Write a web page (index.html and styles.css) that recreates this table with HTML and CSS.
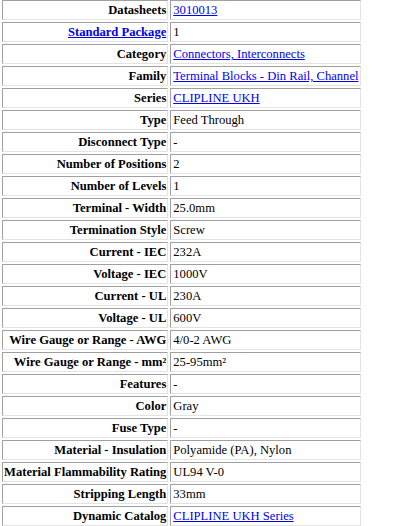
FILE: index.html
```html
<!DOCTYPE html>
<html>
<head>
<meta charset="utf-8">
<link rel="stylesheet" href="styles.css">
</head>
<body>
<table class="specs">
<tr><th>Datasheets</th><td><a href="#">3010013</a></td></tr>
<tr><th><a href="#">Standard Package</a></th><td>1</td></tr>
<tr><th>Category</th><td><a href="#">Connectors, Interconnects</a></td></tr>
<tr><th>Family</th><td><a href="#">Terminal Blocks - Din Rail, Channel</a></td></tr>
<tr><th>Series</th><td><a href="#">CLIPLINE UKH</a></td></tr>
<tr><th>Type</th><td>Feed Through</td></tr>
<tr><th>Disconnect Type</th><td>-</td></tr>
<tr><th>Number of Positions</th><td>2</td></tr>
<tr><th>Number of Levels</th><td>1</td></tr>
<tr><th>Terminal - Width</th><td>25.0mm</td></tr>
<tr><th>Termination Style</th><td>Screw</td></tr>
<tr><th>Current - IEC</th><td>232A</td></tr>
<tr><th>Voltage - IEC</th><td>1000V</td></tr>
<tr><th>Current - UL</th><td>230A</td></tr>
<tr><th>Voltage - UL</th><td>600V</td></tr>
<tr><th>Wire Gauge or Range - AWG</th><td>4/0-2 AWG</td></tr>
<tr><th>Wire Gauge or Range - mm²</th><td>25-95mm²</td></tr>
<tr><th>Features</th><td>-</td></tr>
<tr><th>Color</th><td>Gray</td></tr>
<tr><th>Fuse Type</th><td>-</td></tr>
<tr><th>Material - Insulation</th><td>Polyamide (PA), Nylon</td></tr>
<tr><th>Material Flammability Rating</th><td>UL94 V-0</td></tr>
<tr><th>Stripping Length</th><td>33mm</td></tr>
<tr><th>Dynamic Catalog</th><td><a href="#">CLIPLINE UKH Series</a></td></tr>
</table>
</body>
</html>
```
FILE: styles.css
```css
html, body {
  margin: 0;
  padding: 0;
  background: #ffffff;
}
.specs {
  border-collapse: separate;
  border-spacing: 2px;
  margin: -2px 0 0 0;
  font-family: "Liberation Serif", "Times New Roman", serif;
  font-size: 12.6px;
  line-height: 16px;
  color: #000000;
}
.specs th,
.specs td {
  border-style: solid;
  border-width: 1px;
  border-color: #a0a0a0 #e3e3e3 #e3e3e3 #a0a0a0;
  padding: 1px 1px 1px 1px;
  white-space: nowrap;
}
.specs th {
  text-align: right;
  font-weight: bold;
}
.specs td {
  text-align: left;
  font-weight: normal;
  padding-left: 2px;
}
.specs a {
  color: #0000ee;
  text-decoration: underline;
}
```
